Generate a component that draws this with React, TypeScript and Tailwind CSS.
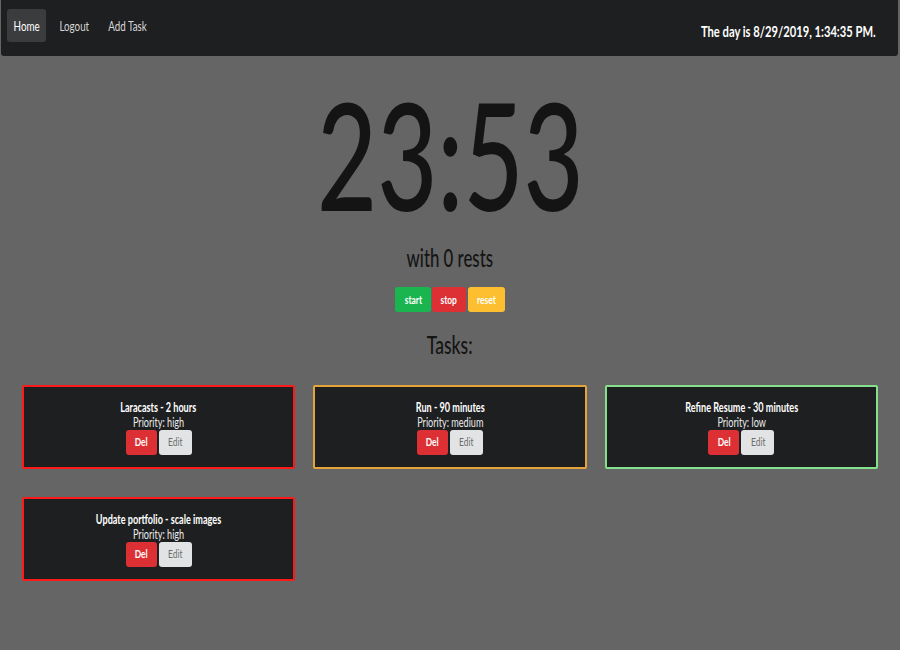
import React from "react";

interface TaskProps {
  title: string;
  priority: "high" | "medium" | "low";
}

// the screenshot text is narrow, so glyphs get squeezed horizontally
const sq = "inline-block whitespace-nowrap scale-x-[0.7]";

const borderFor = {
  high: "border-[#ff1a1a]",
  medium: "border-[#e4a43a]",
  low: "border-[#84e08a]",
};

const tasks: TaskProps[] = [
  { title: "Laracasts - 2 hours", priority: "high" },
  { title: "Run - 90 minutes", priority: "medium" },
  { title: "Refine Resume - 30 minutes", priority: "low" },
  { title: "Update portfolio - scale images", priority: "high" },
];

const NavBar = () => {
  const links = [
    { label: "Home", w: "w-[39px]", active: true },
    { label: "Logout", w: "w-[44px]" },
    { label: "Add Task", w: "w-[50px]" },
  ];
  return (
    <nav className="ml-px mr-[2px] h-[56px] bg-[#1e1f21] rounded-b-[3px] flex items-center justify-between pl-[6px] pr-[22px]">
      <div className="flex items-center gap-[6px] -mt-[6px]">
        {links.map((l) => (
          <a
            key={l.label}
            className={`${l.w} h-[33px] rounded-[3px] flex items-center justify-center text-[14px] ${
              l.active ? "bg-[#3b3c3e] text-white" : "text-[#d6d6d6]"
            }`}
          >
            <span className={sq}>{l.label}</span>
          </a>
        ))}
      </div>
      <div className="pt-[6px] text-[16px] font-bold text-white">
        <span className={`${sq} origin-right`}>The day is 8/29/2019, 1:34:35 PM.</span>
      </div>
    </nav>
  );
};

const TaskCard = ({ title, priority }: TaskProps) => {
  return (
    <div
      className={`h-[84px] border-2 ${borderFor[priority]} rounded-[2px] bg-[#1e1f21] flex flex-col items-center justify-center text-white`}
    >
      <div className="text-[13px] leading-[15px] font-bold">
        <span className={sq}>{title}</span>
      </div>
      <div className="text-[13px] leading-[15px] text-[#ececec]">
        <span className={sq}>Priority: {priority}</span>
      </div>
      <div className="flex gap-[2px]">
        <button className="w-[31px] h-[25px] rounded-[3px] bg-[#dc3035] text-white text-[12px] font-bold flex items-center justify-center">
          <span className={sq}>Del</span>
        </button>
        <button className="w-[33px] h-[25px] rounded-[3px] bg-[#e2e3e5] text-[#6b6b6b] text-[12px] flex items-center justify-center">
          <span className={sq}>Edit</span>
        </button>
      </div>
    </div>
  );
};

export default function App() {
  return (
    <div className="min-h-[650px] bg-[#656565] font-['Lato','Liberation_Sans',sans-serif]">
      <NavBar />
      <main className="flex flex-col items-center">
        <div className="mt-[24px] text-[148px] leading-none font-medium text-[#141414]">
          <span className={sq}>23:53</span>
        </div>
        <div className="mt-[15px] text-[24px] leading-[30px] font-medium text-[#141414]">
          <span className={sq}>with 0 rests</span>
        </div>
        <div className="mt-[14px] flex gap-px">
          <button className="w-[36px] h-[25px] rounded-[3px] bg-[#1ab54f] text-white text-[12px] font-bold flex items-center justify-center">
            <span className={sq}>start</span>
          </button>
          <button className="w-[34px] h-[25px] rounded-[3px] bg-[#dc3035] text-white text-[12px] font-bold flex items-center justify-center">
            <span className={sq}>stop</span>
          </button>
          <button className="w-[37px] h-[25px] ml-px rounded-[3px] bg-[#fdbf30] text-white text-[12px] font-bold flex items-center justify-center">
            <span className={sq}>reset</span>
          </button>
        </div>
        <div className="mt-[17px] text-[25px] leading-[30px] font-medium text-[#141414]">
          <span className={sq}>Tasks:</span>
        </div>
      </main>
      <section className="mt-[26px] px-[22px] grid grid-cols-3 gap-x-[18px] gap-y-[28px]">
        {tasks.map((t) => (
          <TaskCard key={t.title} {...t} />
        ))}
      </section>
    </div>
  );
}
